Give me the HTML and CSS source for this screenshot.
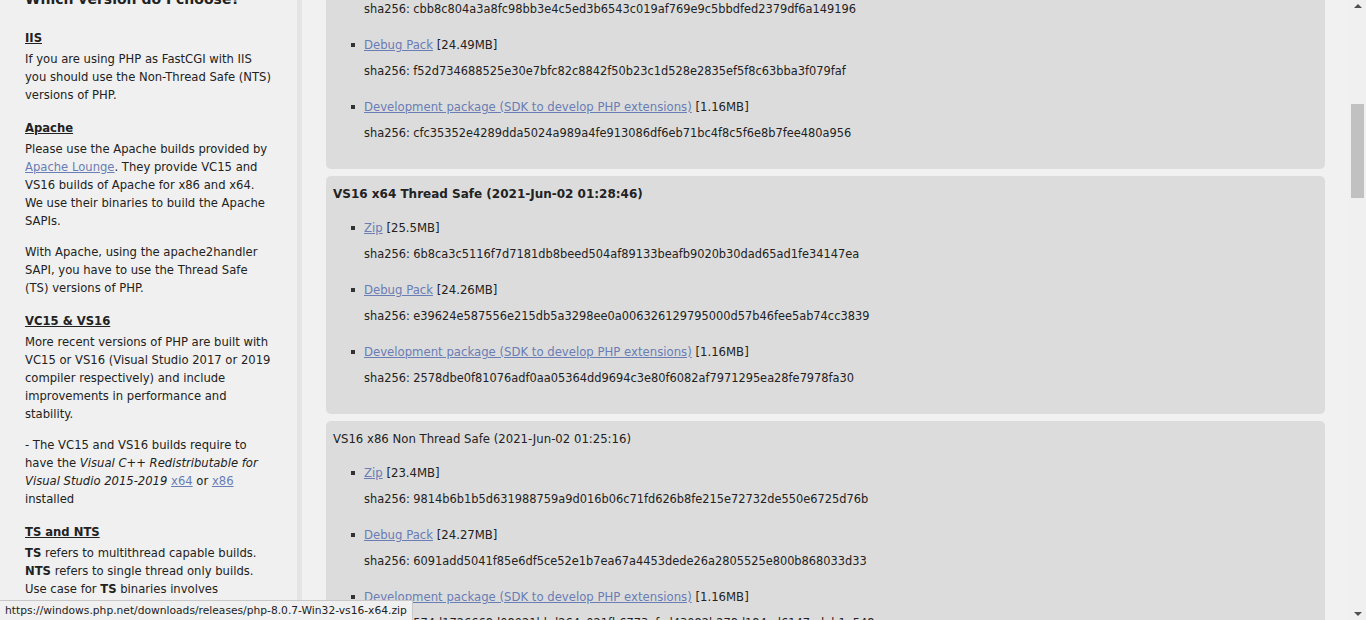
FILE: index.html
```html
<!DOCTYPE html>
<html lang="en">
<head>
<meta charset="utf-8">
<title>PHP For Windows: Binaries and sources Releases</title>
<link rel="stylesheet" href="styles.css">
</head>
<body>
<div class="page">
  <aside class="sidebar">
    <h3 class="side-title">Which version do I choose?</h3>
    <h4 class="side-head">IIS</h4>
    <p>If you are using PHP as FastCGI with IIS you should use the Non-Thread Safe (NTS) versions of PHP.</p>
    <h4 class="side-head">Apache</h4>
    <p>Please use the Apache builds provided by <a href="#">Apache Lounge</a>. They provide VC15 and VS16 builds of Apache for x86 and x64. We use their binaries to build the Apache SAPIs.</p>
    <p>With Apache, using the apache2handler SAPI, you have to use the Thread Safe (TS) versions of PHP.</p>
    <h4 class="side-head">VC15 &amp; VS16</h4>
    <p>More recent versions of PHP are built with VC15 or VS16 (Visual Studio 2017 or 2019 compiler respectively) and include improvements in performance and stability.</p>
    <p>- The VC15 and VS16 builds require to have the <i>Visual C++ Redistributable for Visual Studio 2015-2019</i> <a href="#">x64</a> or <a href="#">x86</a> installed</p>
    <h4 class="side-head">TS and NTS</h4>
    <p><b>TS</b> refers to multithread capable builds.<br><b>NTS</b> refers to single thread only builds.<br>Use case for <b>TS</b> binaries involves interaction with a multithreaded SAPI and PHP loaded as a module into a web server.</p>
  </aside>
  <main class="main">
    <section class="build">
      <h4 class="build-title">VS16 x64 Non Thread Safe (2021-Jun-02 01:28:52)</h4>
      <ul class="files">
        <li><div class="file"><a href="#">Zip</a> [25.6MB]</div><div class="sha">sha256: cbb8c804a3a8fc98bb3e4c5ed3b6543c019af769e9c5bbdfed2379df6a149196</div></li>
        <li><div class="file"><a href="#">Debug Pack</a> [24.49MB]</div><div class="sha">sha256: f52d734688525e30e7bfc82c8842f50b23c1d528e2835ef5f8c63bba3f079faf</div></li>
        <li><div class="file"><a href="#">Development package (SDK to develop PHP extensions)</a> [1.16MB]</div><div class="sha">sha256: cfc35352e4289dda5024a989a4fe913086df6eb71bc4f8c5f6e8b7fee480a956</div></li>
      </ul>
    </section>
    <section class="build">
      <h4 class="build-title">VS16 x64 Thread Safe (2021-Jun-02 01:28:46)</h4>
      <ul class="files">
        <li><div class="file"><a href="#">Zip</a> [25.5MB]</div><div class="sha">sha256: 6b8ca3c5116f7d7181db8beed504af89133beafb9020b30dad65ad1fe34147ea</div></li>
        <li><div class="file"><a href="#">Debug Pack</a> [24.26MB]</div><div class="sha">sha256: e39624e587556e215db5a3298ee0a006326129795000d57b46fee5ab74cc3839</div></li>
        <li><div class="file"><a href="#">Development package (SDK to develop PHP extensions)</a> [1.16MB]</div><div class="sha">sha256: 2578dbe0f81076adf0aa05364dd9694c3e80f6082af7971295ea28fe7978fa30</div></li>
      </ul>
    </section>
    <section class="build">
      <h4 class="build-title light">VS16 x86 Non Thread Safe (2021-Jun-02 01:25:16)</h4>
      <ul class="files">
        <li><div class="file"><a href="#">Zip</a> [23.4MB]</div><div class="sha">sha256: 9814b6b1b5d631988759a9d016b06c71fd626b8fe215e72732de550e6725d76b</div></li>
        <li><div class="file"><a href="#">Debug Pack</a> [24.27MB]</div><div class="sha">sha256: 6091add5041f85e6df5ce52e1b7ea67a4453dede26a2805525e800b868033d33</div></li>
        <li><div class="file"><a href="#">Development package (SDK to develop PHP extensions)</a> [1.16MB]</div><div class="sha">sha256: 574d1726668d08021bbd264c021fb6773efcd43082b278d184ad6147adeb1e548</div></li>
      </ul>
    </section>
  </main>
</div>
<div class="scrollbar">
  <span class="arrow up"></span>
  <span class="thumb"></span>
  <span class="arrow down"></span>
</div>
<div class="status">https://windows.php.net/downloads/releases/php-8.0.7-Win32-vs16-x64.zip</div>
</body>
</html>
```

FILE: styles.css
```css
html, body {
  margin: 0;
  padding: 0;
  height: 100%;
  overflow: hidden;
}
body {
  background: #f0f0f0;
  color: #222;
  font-family: "DejaVu Sans", Verdana, sans-serif;
  font-size: 11.4px;
  line-height: 18px;
}
a {
  color: #6a7db5;
  text-decoration: underline;
}
.page {
  display: flex;
  margin-top: -80px;
  margin-right: 17px;
  align-items: stretch;
  min-height: 900px;
}
.sidebar {
  width: 247px;
  flex: none;
  padding: 69px 25px 0 25px;
  background: #f0f0f0;
  border-right: 5px solid #e4e4e4;
  font-size: 11.6px;
}
.side-title {
  margin: 0 0 18px;
  font-size: 14px;
  line-height: 20px;
  font-weight: bold;
}
.side-head {
  margin: 14px 0 2px;
  font-size: 11.6px;
  line-height: 20px;
  font-weight: bold;
  text-decoration: underline;
}
.side-title + .side-head {
  margin-top: 19px;
}
.sidebar p {
  margin: 0 0 13px;
}
.main {
  flex: 1;
  padding: 11px 24px 0;
  display: flex;
  flex-direction: column;
  gap: 7px;
  background: #f1f1f1;
}
.build {
  background: #dcdcdc;
  border-radius: 5px;
  padding: 9px 7px 27px;
}
.build-title {
  margin: 0;
  font-size: 12px;
  line-height: 18px;
  font-weight: bold;
}
.build-title.light {
  font-weight: normal;
  font-size: 11.7px;
}
.files {
  list-style: none;
  margin: 16px 0 0;
  padding: 0 0 0 31px;
}
.files li + li {
  margin-top: 18px;
}
.file {
  font-size: 11.7px;
}
.file::before {
  content: "";
  display: inline-block;
  width: 4px;
  height: 4px;
  background: #333;
  margin: 0 9px 2px -13px;
  vertical-align: middle;
}
.sha {
  margin-top: 8px;
  font-size: 11.4px;
}
.scrollbar {
  position: fixed;
  top: 0;
  right: 0;
  width: 17px;
  height: 100%;
  background: #f0f0f0;
}
.thumb {
  position: absolute;
  left: 2px;
  top: 104px;
  width: 13px;
  height: 94px;
  background: #c1c1c1;
}
.arrow {
  position: absolute;
  left: 5px;
  width: 0;
  height: 0;
  border-left: 4px solid transparent;
  border-right: 4px solid transparent;
}
.arrow.up {
  top: 4px;
  border-bottom: 4px solid #505050;
}
.arrow.down {
  bottom: 4px;
  border-top: 4px solid #505050;
}
.status {
  position: fixed;
  left: 0;
  bottom: 0;
  padding: 0 5px;
  height: 19px;
  line-height: 19px;
  font-size: 10.7px;
  color: #222;
  background: #f0f0f0;
  border-top: 1px solid #c8c8c8;
  border-right: 1px solid #c8c8c8;
}
```
